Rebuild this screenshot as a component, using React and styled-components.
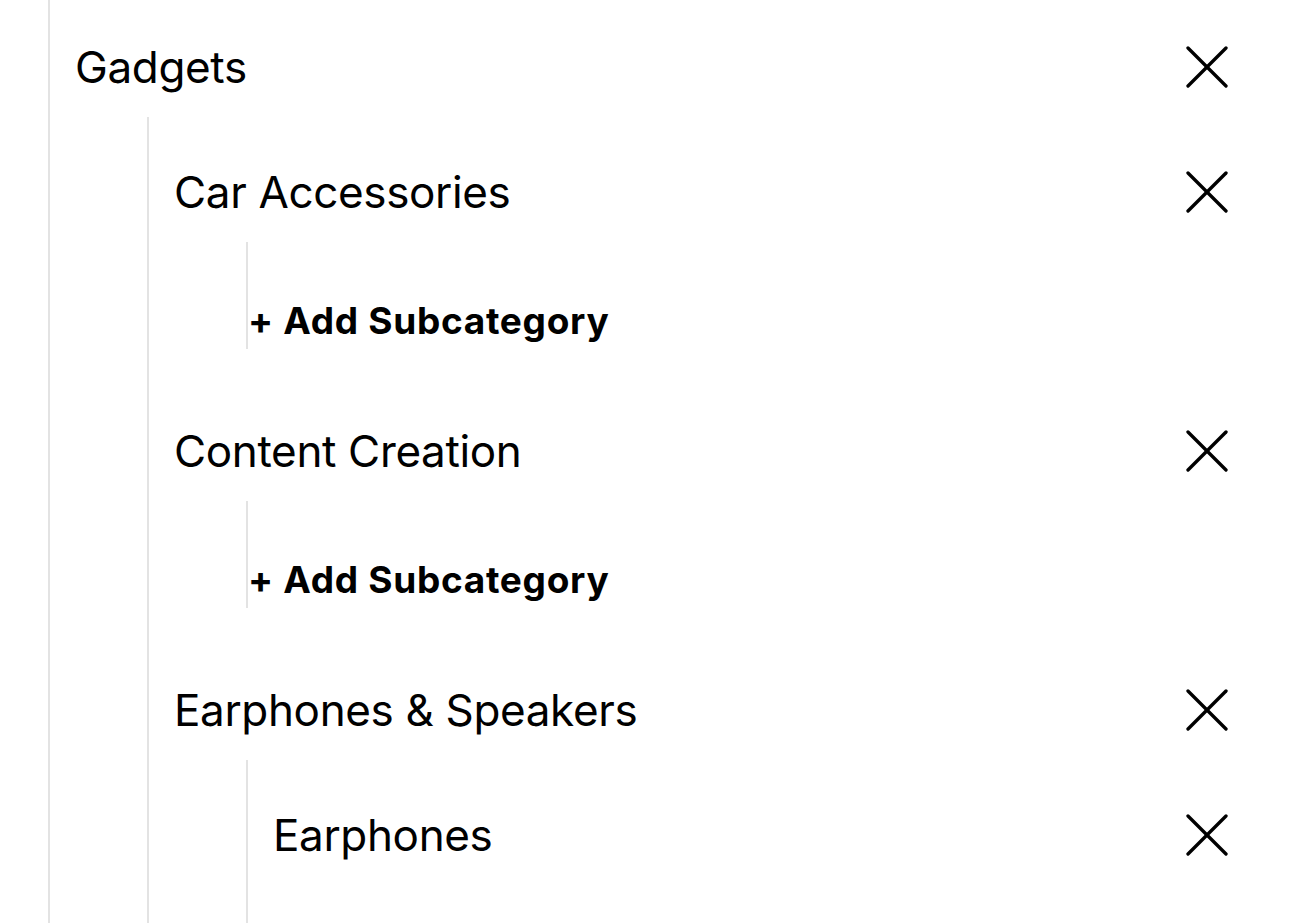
import React from "react";
import styled, { createGlobalStyle } from "styled-components";

const Global = createGlobalStyle`
  html, body { margin: 0; padding: 0; background: #fff; }
  body { font-family: Inter, "Noto Sans", sans-serif; color: #000; -webkit-font-smoothing: antialiased; }
`;

const Page = styled.div`
  padding: 0 62px 0 48px;
`;

const List = styled.div`
  display: flow-root;
  border-left: 2px solid #e3e3e3;
  padding-top: ${(p) => (p.$top != null ? p.$top : 25)}px;
  margin-left: ${(p) => (p.$nested ? 97 : 0)}px;
`;

const Node = styled.div`
  margin-bottom: 52px;
`;

const Row = styled.div`
  display: flex;
  align-items: center;
  justify-content: space-between;
  height: 100px;
  padding-left: 25px;
`;

const Label = styled.span`
  font-size: 44px;
  font-weight: 400;
  line-height: 50px;
  letter-spacing: -0.35px;
`;

const Remove = styled.button`
  border: 0;
  background: none;
  padding: 0;
  margin: 0;
  width: 42px;
  height: 42px;
  display: flex;
  align-items: center;
  justify-content: center;
  cursor: pointer;
  color: #000;
`;

const AddButton = styled.button`
  display: block;
  border: 0;
  background: none;
  margin: 0;
  padding: 29px 0 3px 0;
  font-family: inherit;
  font-size: 37px;
  font-weight: 700;
  line-height: 50px;
  letter-spacing: 0.7px;
  color: #000;
  cursor: pointer;
  text-align: left;
`;

const XIcon = () => (
  <svg width="42" height="42" viewBox="0 0 42 42" fill="none" stroke="currentColor" strokeWidth="3.3" strokeLinecap="round">
    <line x1="2" y1="2" x2="40" y2="40" />
    <line x1="40" y1="2" x2="2" y2="40" />
  </svg>
);

const tree = [
  {
    name: "Gadgets",
    children: [
      { name: "Car Accessories", children: [] },
      { name: "Content Creation", children: [] },
      {
        name: "Earphones & Speakers",
        children: [{ name: "Earphones", leaf: true }],
      },
    ],
  },
];

function TreeNode({ node, depth }) {
  return (
    <Node>
      <Row>
        <Label>{node.name}</Label>
        <Remove aria-label={`Remove ${node.name}`}>
          <XIcon />
        </Remove>
      </Row>
      {!node.leaf && (
        <List $nested>
          {node.children.map((c) => (
            <TreeNode key={c.name} node={c} depth={depth + 1} />
          ))}
          {depth >= 1 && node.children.length === 0 && <AddButton>+ Add Subcategory</AddButton>}
        </List>
      )}
    </Node>
  );
}

export default function App() {
  return (
    <>
      <Global />
      <Page>
        <List $top={17}>
          {tree.map((n) => (
            <TreeNode key={n.name} node={n} depth={0} />
          ))}
        </List>
      </Page>
    </>
  );
}
